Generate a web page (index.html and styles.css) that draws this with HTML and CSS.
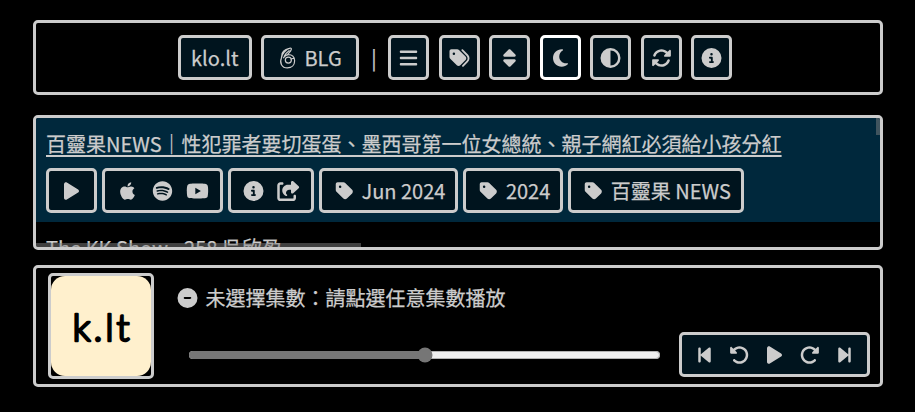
FILE: index.html
```html
<!DOCTYPE html>
<html lang="zh-Hant">
<head>
<meta charset="utf-8">
<title>klo.lt</title>
<link rel="stylesheet" href="styles.css">
</head>
<body>
<svg class="defs" aria-hidden="true">
<symbol id="bars" viewBox="0 0 448 512"><path d="M0 96C0 78.3 14.3 64 32 64H416c17.7 0 32 14.3 32 32s-14.3 32-32 32H32C14.3 128 0 113.7 0 96zM0 256c0-17.7 14.3-32 32-32H416c17.7 0 32 14.3 32 32s-14.3 32-32 32H32c-17.7 0-32-14.3-32-32zM448 416c0 17.7-14.3 32-32 32H32c-17.7 0-32-14.3-32-32s14.3-32 32-32H416c17.7 0 32 14.3 32 32z"/></symbol>
<symbol id="tag" viewBox="0 0 448 512"><path d="M0 80V229.5c0 17 6.7 33.3 18.7 45.3l176 176c25 25 65.5 25 90.5 0L418.7 317.3c25-25 25-65.5 0-90.5l-176-176c-12-12-28.3-18.7-45.3-18.7H48C21.5 32 0 53.5 0 80zm112 32a32 32 0 1 1 0 64 32 32 0 1 1 0-64z"/></symbol>
<symbol id="tags" viewBox="0 0 512 512"><path d="M345 39.1L472.8 168.4c52.4 53 52.4 138.2 0 191.2L360.8 472.9c-9.3 9.4-24.5 9.5-33.9 .2s-9.5-24.5-.2-33.9L438.6 325.9c33.9-34.3 33.9-89.4 0-123.7L310.9 72.9c-9.3-9.4-9.2-24.6 .2-33.9s24.6-9.2 33.9 .2zM0 229.5V80C0 53.5 21.5 32 48 32H197.5c17 0 33.3 6.7 45.3 18.7l168 168c25 25 25 65.5 0 90.5L277.3 442.7c-25 25-65.5 25-90.5 0l-168-168C6.7 262.7 0 246.5 0 229.5zM144 144a32 32 0 1 0 -64 0 32 32 0 1 0 64 0z"/></symbol>
<symbol id="sort" viewBox="0 0 320 512"><path d="M137.4 41.4c12.5-12.5 32.8-12.5 45.3 0l128 128c9.2 9.2 11.9 22.9 6.9 34.9s-16.6 19.8-29.6 19.8H32c-12.9 0-24.6-7.8-29.6-19.8s-2.2-25.7 6.9-34.9l128-128zm0 429.3l-128-128c-9.2-9.2-11.9-22.9-6.9-34.9s16.6-19.8 29.6-19.8H288c12.9 0 24.6 7.8 29.6 19.8s2.2 25.7-6.9 34.9l-128 128c-12.5 12.5-32.8 12.5-45.3 0z"/></symbol>
<symbol id="moon" viewBox="0 0 384 512"><path d="M223.5 32C100 32 0 132.3 0 256S100 480 223.5 480c60.6 0 115.5-24.2 155.8-63.4c5-4.9 6.3-12.5 3.1-18.7s-10.1-9.7-17-8.5c-9.8 1.7-19.8 2.6-30.1 2.6c-96.9 0-175.5-78.8-175.5-176c0-65.8 36-123.1 89.3-153.3c6.1-3.5 9.2-10.5 7.7-17.3s-7.3-11.9-14.3-12.5c-6.3-.5-12.6-.8-19-.8z"/></symbol>
<symbol id="half" viewBox="0 0 512 512"><path d="M448 256c0-106-86-192-192-192V448c106 0 192-86 192-192zM0 256a256 256 0 1 1 512 0A256 256 0 1 1 0 256z"/></symbol>
<symbol id="sync" viewBox="0 0 512 512"><path d="M142.9 142.9c62.2-62.2 162.7-62.5 225.3-1L327 183c-6.9 6.9-8.9 17.2-5.2 26.2s12.5 14.8 22.2 14.8H463.5H472c13.3 0 24-10.7 24-24V72c0-9.7-5.8-18.5-14.8-22.2s-19.3-1.7-26.2 5.2L413.4 96.6c-87.6-86.5-228.7-86.2-315.8 1C73.2 122 55.6 150.7 44.8 181.4c-5.9 16.7 2.9 34.9 19.5 40.8s34.9-2.9 40.8-19.5c7.7-21.8 20.2-42.3 37.8-59.8zM16 312v7.6 .7V440c0 9.7 5.8 18.5 14.8 22.2s19.3 1.7 26.2-5.2l41.6-41.6c87.6 86.5 228.7 86.2 315.8-1c24.4-24.4 42.1-53.1 52.9-83.7c5.9-16.7-2.9-34.9-19.5-40.8s-34.9 2.9-40.8 19.5c-7.7 21.8-20.2 42.3-37.8 59.8c-62.2 62.2-162.7 62.5-225.3 1L185 329c6.9-6.9 8.9-17.2 5.2-26.2s-12.5-14.8-22.2-14.8H48.4h-.7H40c-13.3 0-24 10.7-24 24z"/></symbol>
<symbol id="info" viewBox="0 0 512 512"><path d="M256 512A256 256 0 1 0 256 0a256 256 0 1 0 0 512zM216 336h24V272H216c-13.3 0-24-10.7-24-24s10.7-24 24-24h48c13.3 0 24 10.7 24 24v88h8c13.3 0 24 10.7 24 24s-10.7 24-24 24H216c-13.3 0-24-10.7-24-24s10.7-24 24-24zm40-208a32 32 0 1 1 0 64 32 32 0 1 1 0-64z"/></symbol>
<symbol id="minus" viewBox="0 0 512 512"><path d="M256 512A256 256 0 1 0 256 0a256 256 0 1 0 0 512zM184 232H328c13.3 0 24 10.7 24 24s-10.7 24-24 24H184c-13.3 0-24-10.7-24-24s10.7-24 24-24z"/></symbol>
<symbol id="play" viewBox="0 0 384 512"><path d="M73 39c-14.8-9.1-33.4-9.4-48.5-.9S0 62.6 0 80V432c0 17.4 9.4 33.4 24.5 41.9s33.7 8.1 48.5-.9L361 297c14.3-8.7 23-24.2 23-41s-8.7-32.2-23-41L73 39z"/></symbol>
<symbol id="undo" viewBox="0 0 512 512"><path d="M48.5 224H40c-13.3 0-24-10.7-24-24V72c0-9.7 5.8-18.5 14.8-22.2s19.3-1.7 26.2 5.2L98.6 96.6c87.6-86.5 228.7-86.2 315.8 1c87.5 87.5 87.5 229.3 0 316.8s-229.3 87.5-316.8 0c-12.5-12.5-12.5-32.8 0-45.3s32.8-12.5 45.3 0c62.5 62.5 163.8 62.5 226.3 0s62.5-163.8 0-226.3c-62.2-62.2-162.7-62.5-225.3-1L185 183c6.9 6.9 8.9 17.2 5.2 26.2s-12.5 14.8-22.2 14.8H48.5z"/></symbol>
<symbol id="back" viewBox="0 0 320 512"><path d="M267.5 440.6c9.5 7.9 22.8 9.7 34.1 4.4s18.4-16.6 18.4-29V96c0-12.4-7.2-23.7-18.4-29s-24.5-3.6-34.1 4.4l-192 160L64 241V96c0-17.7-14.3-32-32-32S0 78.3 0 96V416c0 17.7 14.3 32 32 32s32-14.3 32-32V271l11.5 9.6 192 160z"/></symbol>
<symbol id="apple" viewBox="0 0 384 512"><path d="M318.7 268.7c-.2-36.7 16.4-64.4 50-84.8-18.8-26.9-47.2-41.7-84.7-44.6-35.5-2.8-74.3 20.7-88.5 20.7-15 0-49.4-19.7-76.4-19.7C63.3 141.2 4 184.8 4 273.5q0 39.3 14.4 81.2c12.8 36.7 59 126.7 107.2 125.2 25.2-.6 43-17.9 75.8-17.9 31.8 0 48.3 17.9 76.4 17.9 48.6-.7 90.4-82.5 102.6-119.3-65.2-30.7-61.7-90-61.7-91.9zm-56.6-164.2c27.3-32.4 24.8-61.9 24-72.5-24.1 1.4-52 16.4-67.9 34.9-17.5 19.8-27.8 44.3-25.6 71.9 26.1 2 49.9-11.4 69.5-34.3z"/></symbol>
<symbol id="spotify" viewBox="0 0 496 512"><path d="M248 8C111.1 8 0 119.1 0 256s111.1 248 248 248 248-111.1 248-248S384.9 8 248 8zm100.7 364.9c-4.2 0-6.8-1.3-10.7-3.6-62.4-37.6-135-39.2-206.7-24.5-3.9 1-9 2.6-11.9 2.6-9.7 0-15.8-7.7-15.8-15.8 0-10.3 6.1-15.2 13.6-16.8 81.9-18.1 165.6-16.5 237 26.2 6.1 3.9 9.7 7.4 9.7 16.5s-7.1 15.4-15.2 15.4zm26.9-65.6c-5.2 0-8.7-2.3-12.3-4.2-62.5-37-155.7-51.9-238.6-29.4-4.8 1.3-7.4 2.6-11.9 2.6-10.7 0-19.4-8.7-19.4-19.4s5.2-17.8 15.5-20.7c27.8-7.8 56.2-13.6 97.8-13.6 64.9 0 127.6 16.1 177 45.5 8.1 4.8 11.3 11 11.3 19.7-.1 10.8-8.5 19.5-19.4 19.5zm31-76.2c-5.2 0-8.4-1.3-12.9-3.9-71.2-42.5-198.5-52.7-280.9-29.7-3.6 1-8.1 2.6-12.9 2.6-13.2 0-23.3-10.3-23.3-23.6 0-13.6 8.4-21.3 17.4-23.9 35.2-10.3 74.6-15.2 117.5-15.2 73 0 149.5 15.2 205.4 47.8 7.8 4.5 12.9 10.7 12.9 22.6 0 13.6-11 23.3-23.2 23.3z"/></symbol>
<symbol id="youtube" viewBox="0 0 576 512"><path d="M549.655 124.083c-6.281-23.65-24.787-42.276-48.284-48.597C458.781 64 288 64 288 64S117.22 64 74.629 75.486c-23.497 6.322-42.003 24.947-48.284 48.597-11.412 42.867-11.412 132.305-11.412 132.305s0 89.438 11.412 132.305c6.281 23.65 24.787 41.5 48.284 47.821C117.22 448 288 448 288 448s170.78 0 213.371-11.486c23.497-6.321 42.003-24.171 48.284-47.821 11.412-42.867 11.412-132.305 11.412-132.305s0-89.438-11.412-132.305zm-317.51 213.508V175.185l142.739 81.205-142.739 81.201z"/></symbol>
<symbol id="share" viewBox="0 0 576 512"><path d="M352 224H305.5c-45 0-81.5 36.5-81.5 81.5c0 22.3 10.3 34.3 19.2 40.5c6.8 4.7 12.8 12 12.8 20.3c0 9.8-8 17.8-17.8 17.8h-2.5c-2.4 0-4.8-.4-7.1-1.4C210.8 374.8 128 333.4 128 240c0-79.5 64.5-144 144-144h80V34.7C352 15.5 367.5 0 386.7 0c8.6 0 16.8 3.2 23.2 8.9L548.1 133.3c7.6 6.8 11.9 16.5 11.9 26.7s-4.3 19.9-11.9 26.7l-139 125.1c-5.9 5.3-13.5 8.2-21.4 8.2H384c-17.7 0-32-14.3-32-32V224zM80 96c-8.8 0-16 7.2-16 16V432c0 8.8 7.2 16 16 16H400c8.8 0 16-7.2 16-16V384c0-17.7 14.3-32 32-32s32 14.3 32 32v48c0 44.2-35.8 80-80 80H80c-44.2 0-80-35.8-80-80V112C0 67.8 35.8 32 80 32h48c17.7 0 32 14.3 32 32s-14.3 32-32 32H80z"/></symbol>
<symbol id="hand" viewBox="0 0 16 21"><g fill="none" stroke="currentColor" stroke-width="1.15" stroke-linecap="round" stroke-linejoin="round"><circle cx="8.800" cy="12.500" r="2.900"/><path d="M2.200 10.500C.2 15 2.500 20 7.800 20c4.400 0 7-3 7-6.800C14.800 9.500 12.300 7.300 9 7.300c-2 0-3.500 1-4.800 3M2.200 10.500C2 7 7.500 1.500 10.500 1c2-.2 1.300 2-.8 4.300L7.800 7.500M2.500 8.500C2 5.500 5.500 2 9 1.500M5 8.500C6 6.500 7.500 5 9.500 3.500M11.500 11.500l3-1"/></g></symbol>
</svg>
<main class="page">
  <nav class="panel toolbar">
    <a class="btn name">klo.lt</a>
    <a class="btn brand"><svg class="icon"><use href="#hand"/></svg><span>BLG</span></a>
    <span class="divider">|</span>
    <a class="btn square"><svg class="icon"><use href="#bars"/></svg></a>
    <a class="btn square"><svg class="icon"><use href="#tags"/></svg></a>
    <a class="btn square"><svg class="icon"><use href="#sort"/></svg></a>
    <a class="btn square active"><svg class="icon"><use href="#moon"/></svg></a>
    <a class="btn square"><svg class="icon"><use href="#half"/></svg></a>
    <a class="btn square"><svg class="icon"><use href="#sync"/></svg></a>
    <a class="btn square"><svg class="icon"><use href="#info"/></svg></a>
  </nav>
  <section class="panel list">
    <article class="episode current">
      <a class="title">百靈果NEWS｜性犯罪者要切蛋蛋、墨西哥第一位女總統、親子網紅必須給小孩分紅</a>
      <div class="actions">
        <span class="btn"><svg class="icon"><use href="#play"/></svg></span>
        <span class="btn group"><svg class="icon"><use href="#apple"/></svg><svg class="icon"><use href="#spotify"/></svg><svg class="icon"><use href="#youtube"/></svg></span>
        <span class="btn group"><svg class="icon"><use href="#info"/></svg><svg class="icon"><use href="#share"/></svg></span>
        <span class="btn"><svg class="icon"><use href="#tag"/></svg><span>&nbsp;Jun 2024</span></span>
        <span class="btn"><svg class="icon"><use href="#tag"/></svg><span>&nbsp;2024</span></span>
        <span class="btn"><svg class="icon"><use href="#tag"/></svg><span>&nbsp;百靈果 NEWS</span></span>
      </div>
    </article>
    <article class="episode"><a class="title plain">The KK Show - 258 吳欣盈</a></article>
    <i class="bar-v"></i>
    <i class="bar-h"></i>
  </section>
  <section class="panel player">
    <div class="cover"><svg class="logo" viewBox="0 0 100 100"><text x="21.500" y="64.500" textLength="57" lengthAdjust="spacing">k.lt</text></svg></div>
    <div class="info">
      <div class="now"><svg class="icon"><use href="#minus"/></svg><span>&nbsp;未選擇集數：請點選任意集數播放</span></div>
      <div class="row">
        <input class="seek" type="range" min="0" max="100" value="50">
        <div class="btn group"><svg class="icon"><use href="#back"/></svg><svg class="icon"><use href="#undo"/></svg><svg class="icon"><use href="#play"/></svg><svg class="icon flip"><use href="#undo"/></svg><svg class="icon flip"><use href="#back"/></svg></div>
      </div>
    </div>
  </section>
</main>
</body>
</html>
```
FILE: styles.css
```css
* { box-sizing: border-box; }
body {
  margin: 0;
  height: 412px;
  overflow: hidden;
  background: #000;
  color: #ccc;
  font: 20px/29px "Noto Sans CJK TC", sans-serif;
  -webkit-text-stroke: 0.25px currentColor;
}
.defs { display: none; }
.page { margin: 20px 32px 0 33px; }
.panel { border: 3px solid #ccc; border-radius: 5px; }
.btn {
  display: flex;
  align-items: center;
  flex: none;
  height: 45px;
  padding: 0 10px;
  border: 3px solid #ccc;
  border-radius: 5px;
  background: #00141e;
  white-space: nowrap;
}
.icon { display: block; flex: none; width: 25px; height: 20px; fill: currentColor; }
.flip { transform: scaleX(-1); }
.group { gap: 10px; }
.toolbar {
  display: flex;
  justify-content: center;
  align-items: center;
  gap: 9.45px;
  height: 75px;
  padding-right: 6px;
}
.name { width: 74px; }
.brand { width: 98px; gap: 4px; padding: 0 0 0 11px; }
.brand .icon { height: 22px; }
.square { padding: 0 5px; }
.active { border-color: #fff; }
.divider { width: 10px; text-align: center; }
.list {
  position: relative;
  height: 135px;
  margin-top: 20px;
  overflow: hidden;
}
.episode { height: 104px; padding: 11px 10px 0; }
.current { background: #00283c; }
.title {
  display: block;
  width: max-content;
  height: 29px;
  white-space: nowrap;
  text-decoration: underline;
  text-decoration-thickness: 2px;
  text-underline-offset: 3px;
}
.plain { text-decoration: none; }
.actions { display: flex; gap: 5px; margin-top: 10px; }
.bar-v, .bar-h { position: absolute; background: rgba(128, 128, 128, 0.5); }
.bar-v { top: 0; right: 0; width: 4px; height: 17px; }
.bar-h { left: 0; bottom: 0; width: 325px; height: 4px; }
.player { display: flex; height: 122px; margin-top: 15px; padding: 5px 10px 0 12px; }
.cover { flex: none; width: 106px; height: 106px; border: 3px solid #ccc; border-radius: 5px; }
.logo { display: block; width: 100px; height: 100px; border-radius: 14px; background: #fff0cd; }
.logo text {
  font: 300 38px "Lato", sans-serif;
  fill: #000;
  stroke: #000;
  stroke-width: 2.5px;
  -webkit-text-stroke: 0;
  stroke-linejoin: round;
}
.info { flex: 1; margin-left: 21px; }
.now { display: flex; align-items: center; gap: 1px; height: 49px; }
.row { display: flex; align-items: center; justify-content: space-between; height: 45px; margin-top: 10px; }
.seek { width: 473px; height: 16px; margin: 0 0 0 13px; accent-color: #767676; }
```
